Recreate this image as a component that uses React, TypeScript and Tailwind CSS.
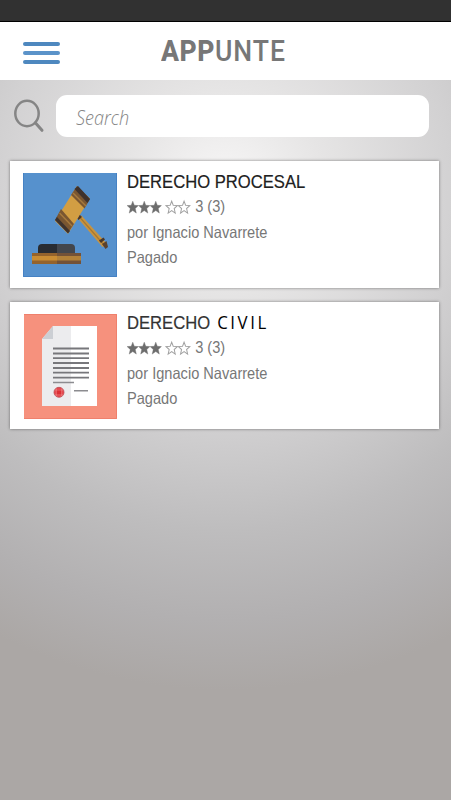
const STAR = "M6 0.2 7.6 4.1 11.9 4.4 8.6 7.2 9.7 11.6 6 9.2 2.3 11.6 3.4 7.2 0.1 4.4 4.4 4.1Z";

function Star({ filled }: { filled: boolean }) {
  return (
    <svg viewBox="0 0 12 12" className="w-[13px] h-[12.5px] overflow-visible" preserveAspectRatio="none">
      <path
        d={STAR}
        fill={filled ? "#6d6d6d" : "none"}
        stroke={filled ? "#6d6d6d" : "#a0a0a0"}
        strokeWidth={filled ? 0.4 : 1}
      />
    </svg>
  );
}

function Gavel() {
  return (
    <svg viewBox="0 0 94 104" className="w-[94px] h-[104px] shrink-0">
      <rect width="94" height="104" fill="#5691cd" />
      <path d="M0.5 0V103.5H93.5V0" fill="none" stroke="#4682c4" />
      {/* mango */}
      <path d="M54.5 45 58.5 42.5 84.5 71.5 79.5 74Z" fill="#c89440" />
      <path d="M57 44.5 82 73" stroke="#a87931" strokeWidth="1.2" />
      <path d="M53 44 56.5 41.5 59 44 55.5 47Z" fill="#49382c" />
      <path d="M76 67.5 80.5 64.5 82 66.5 78 70Z" fill="#49382c" />
      <path d="M79 71 83.5 68 85 74 82.5 76Z" fill="#5b412d" />
      {/* cabeza */}
      <path d="M54 13 67 25.5 45 61 32 48Z" fill="#d29e43" />
      <path d="M54 13 67 26 61.5 35.5 48 22Z" fill="#7a5631" />
      <path d="M55 13 67 26 64.5 30 51.5 16Z" fill="#3e322d" />
      <path d="M50 20 63 33" stroke="#a77a3d" strokeWidth="1.4" />
      <path d="M38 36 51 51 45 60 32 47Z" fill="#7a5631" />
      <path d="M34 44 47 58 45 60.5 32 47Z" fill="#3e322d" />
      <path d="M36.5 40 49 53" stroke="#a77a3d" strokeWidth="1.4" />
      {/* base */}
      <path d="M15 80V75Q15 71 19 71H34V80Z" fill="#292c32" />
      <path d="M34 71H48Q52 71 52 75V80H34Z" fill="#43464c" />
      <path d="M9 80H34V91H9Z" fill="#94632d" />
      <path d="M34 80H58V91H34Z" fill="#735238" />
      <path d="M9 83H34V87.5H9Z" fill="#c98d34" />
      <path d="M34 83H58V87.5H34Z" fill="#b28139" />
    </svg>
  );
}

function Certificate() {
  const lines = [34.5, 39.5, 44.2, 49, 54, 58.7, 63.7];
  return (
    <svg viewBox="0 0 93 105" className="w-[93px] h-[105px] shrink-0">
      <rect width="93" height="105" fill="#f6917d" />
      <path d="M0 0.5H92.5V104.5H0" fill="none" stroke="#ef806c" />
      <path d="M29 12H47V92H18V25Z" fill="#ececee" />
      <path d="M47 12H73V92H47Z" fill="#fff" />
      <path d="M29 12V25H18Z" fill="#cccfd4" />
      {lines.map((y) => (
        <path key={y} d={`M29 ${y}H65`} stroke="#77777b" strokeWidth="1.8" />
      ))}
      <path d="M29 68.5H50M50 76.7H64" stroke="#8c8c90" strokeWidth="1.5" />
      <circle cx="35" cy="78.3" r="5" fill="#e8474e" stroke="#b84c54" strokeWidth="0.8" />
      <rect x="32" y="75.3" width="6" height="6" fill="#dc3036" />
      <path d="M31 76H39M31 80.9H39M32.4 74.5V82M37.6 74.5V82" stroke="#f39a9b" strokeWidth="0.5" />
    </svg>
  );
}

function Details({ children }: { children: React.ReactNode }) {
  return (
    <div className="ml-2.5 -mt-[4px] origin-left scale-x-[0.885] font-['Liberation_Sans',sans-serif] text-[16.5px] leading-[25.4px] text-[#777777] whitespace-nowrap">
      {children}
      <div className="flex items-center">
        <Star filled />
        <Star filled />
        <Star filled />
        <span className="w-[4.5px]" />
        <Star filled={false} />
        <span className="w-[1.5px]" />
        <Star filled={false} />
        <span className="ml-[6px]">3 (3)</span>
      </div>
      <p>por Ignacio Navarrete</p>
      <p>Pagado</p>
    </div>
  );
}

export default function App() {
  return (
    <div className="w-full h-[800px] flex flex-col overflow-hidden bg-[radial-gradient(circle_at_225px_190px,#f8f7f7_0px,#e6e5e5_100px,#d2d1d2_230px,#bebdbe_340px,#b2b0b1_430px,#aba7a5_500px)]">
      <div className="h-[22px] shrink-0 bg-[#313131] border-b border-black" />

      <header className="h-[58px] shrink-0 bg-white flex items-center">
        <button className="ml-[23px] mt-1 w-[37px] flex flex-col gap-[5.2px]" aria-label="Menú">
          <span className="h-[3.6px] w-full rounded-full bg-[#4e88bf]" />
          <span className="h-[3.6px] w-full rounded-full bg-[#5b93c9]" />
          <span className="h-[3.6px] w-full rounded-full bg-[#4e88bf]" />
        </button>
        <h1 className="ml-[101px] mt-0.5 font-[Roboto,sans-serif] text-[29.5px] leading-none font-medium tracking-[1.1px] text-[#777777] whitespace-nowrap origin-left scale-x-[0.9]">
          <span className="font-extrabold tracking-[0.6px]">APP</span>UNTE
        </h1>
      </header>

      <div className="flex items-center pt-[15px] pl-[13px]">
        <svg viewBox="0 0 34 36" className="w-[34px] h-9" fill="none" stroke="#858585" strokeWidth="2.5" strokeLinecap="round">
          <ellipse cx="14" cy="15.5" rx="11.7" ry="12.7" />
          <path d="M22.3 24.8 29 32.3" strokeWidth="3" />
        </svg>
        <label className="ml-[9px] w-[373px] h-[42px] rounded-[11px] bg-white pl-5 flex items-center">
          <input
            placeholder="Search"
            className="w-[300px] mt-[3px] origin-left scale-x-[0.86] font-['Open_Sans',sans-serif] italic font-light text-[21px] placeholder:text-[#858585] outline-none"
          />
        </label>
      </div>

      <main className="flex flex-col gap-3.5 mt-6 ml-2.5 w-[429px]">
        <article className="h-[127px] bg-white flex pl-[13px] pt-3 shadow-[0_0_3px_rgba(0,0,0,0.45)]">
          <Gavel />
          <Details>
            <h2 className="text-[18.8px] text-[#202020] [-webkit-text-stroke:0.2px_#202020]">DERECHO PROCESAL</h2>
          </Details>
        </article>

        <article className="h-[127px] bg-white flex pl-3.5 pt-3 shadow-[0_0_3px_rgba(0,0,0,0.45)]">
          <Certificate />
          <Details>
            <h2 className="text-[18.8px] text-[#333333] [-webkit-text-stroke:0.2px_#333333]">
              DERECHO
              <span className="ml-2 font-['Open_Sans',sans-serif] text-[19px] leading-none tracking-[2.9px] text-black [-webkit-text-stroke:0px]">
                CIVIL
              </span>
            </h2>
          </Details>
        </article>
      </main>
    </div>
  );
}
